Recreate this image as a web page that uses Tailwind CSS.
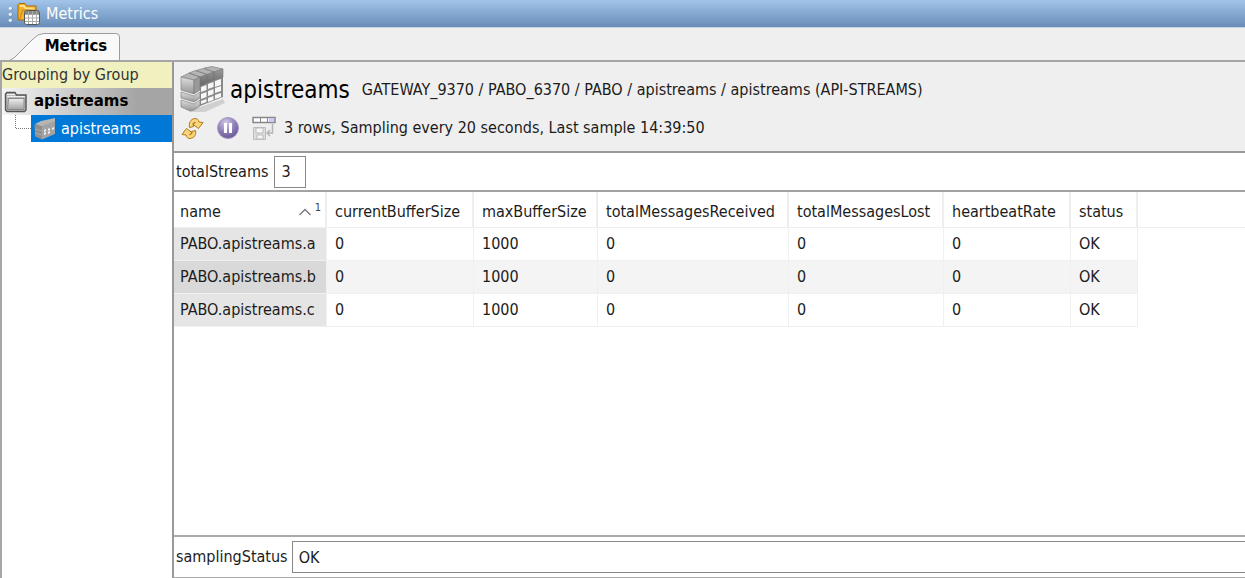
<!doctype html>
<html lang="en">

<head>
    <meta charset="UTF-8">
    <meta name="viewport" content="width=device-width, initial-scale=1.0">
    <title>Metrics</title>
    <script src="https://cdn.jsdelivr.net/npm/@tailwindcss/browser@4"></script>
</head>

<body class="flex h-screen flex-col overflow-hidden bg-[#efefef] font-['DejaVu_Sans_Condensed','Noto_Sans',sans-serif] text-base text-[#1c1c1c]">
    <!-- title bar -->
    <header class="flex h-7 shrink-0 items-center border-b border-[#c3d3e4] bg-linear-to-b from-[#a3c4ea] to-[#678db8] pl-2 text-white">
        <svg class="h-6 w-8" viewBox="0 0 32 24" aria-hidden="true">
            <g fill="#6f91b8">
                <circle cx="3" cy="7" r="1.8" />
                <circle cx="3" cy="13" r="1.8" />
                <circle cx="3" cy="19" r="1.8" />
            </g>
            <g fill="#edf3fa">
                <circle cx="2.3" cy="6.3" r="1.6" />
                <circle cx="2.3" cy="12.3" r="1.6" />
                <circle cx="2.3" cy="18.3" r="1.6" />
            </g>
            <path d="M10 18V2.500l1-1h6l1.500 2.500H28V18z" fill="#f2b32c" stroke="#a96908" />
            <path d="M12 4h4l1.500 2.500H26" fill="none" stroke="#ffe08a" stroke-width="2" />
            <path d="M11.500 18l3-10H26" fill="none" stroke="#c98514" />
            <rect x="16.500" y="8.500" width="15" height="14" rx="2" fill="#fff" stroke="#555" />
            <path d="M17 9h14v3H17z" fill="#888" />
            <path d="M20.500 9v13M24.500 9v13M28.500 9v13M17 12.500h14M17 16h14M17 19.500h14" stroke="#aaa" />
        </svg>
        <span class="ml-1.5">Metrics</span>
    </header>

    <!-- tabs -->
    <nav class="flex h-8 shrink-0 items-end">
        <button type="button" class="relative h-7 w-30 pl-8 text-center font-['DejaVu_Sans',sans-serif] text-[15px] font-bold text-black">
            <svg class="absolute inset-0 h-full w-full" viewBox="0 0 120 28" aria-hidden="true">
                <path d="M10 28Q14 27 18 22L33 7Q38 1.500 44 1.500H116Q119.500 1.500 119.500 5V28" fill="#f9f9f9" stroke="#9c9c9c" />
            </svg>
            <span class="relative">Metrics</span>
        </button>
    </nav>

    <div class="flex min-h-0 flex-1 border-t-2 border-l-2 border-[#a5a5a5]">
        <!-- group tree -->
        <aside class="w-[170px] shrink-0 bg-white">
            <div class="h-[26px] bg-[#f1f0bf] leading-[26px] text-[#333]">Grouping by Group</div>
            <div class="flex h-[27px] items-center bg-linear-to-r from-[#f4f4f4] to-[#a5a5a5] to-80% pl-0.5 font-['DejaVu_Sans',sans-serif] text-[15px] font-bold text-black">
                <svg class="h-6 w-6" viewBox="0 0 24 24" aria-hidden="true">
                    <defs>
                        <linearGradient id="folder" x2="0" y2="1">
                            <stop stop-color="#eee" />
                            <stop offset="1" stop-color="#a5a5a5" />
                        </linearGradient>
                    </defs>
                    <path d="M1.500 20V4L3 2.500h8L12.500 5H22v15l-1.500 1.500H3z" fill="#bbb" stroke="#555" stroke-width="1.400" />
                    <path d="M4.500 8.500h15.500v11H3.500z" fill="url(#folder)" stroke="#888" />
                    <path d="M3 4.500h8M3 6.500h18" stroke="#eee" />
                </svg>
                <span class="ml-1.5">apistreams</span>
            </div>
            <div class="flex h-[27px]">
                <svg class="h-[27px] w-[29px]" viewBox="0 0 29 27" aria-hidden="true">
                    <path d="M13.500 0v13.500H29" fill="none" stroke="#777" stroke-dasharray="1 1" />
                </svg>
                <a href="#" class="flex flex-1 items-center bg-[#0078d7] pl-0.5 text-white">
                    <svg class="h-6 w-6" viewBox="0 0 24 24" aria-hidden="true">
                        <path d="M2 7l6-3 14-3v5L9 10z" fill="#b5b5b5" />
                        <path d="M1.500 7.500L9 9v13.500l-7-3z" fill="#8e8e8e" />
                        <path d="M9 9l13-5v13L9 22.500z" fill="#a3a3a3" />
                        <path d="M2 12l7 2M2 16l7 2" stroke="#aaa" />
                        <path d="M11 13l2-1v2l-2 1zm4-1 2-1v2l-2 1zm4-1 2-1v2l-2 1zm-8 5 2-1v2l-2 1zm4-1 2-1v2l-2 1z" fill="#f4f4f4" />
                    </svg>
                    <span class="ml-1">apistreams</span>
                </a>
            </div>
        </aside>

        <main class="flex min-w-0 flex-1 flex-col border-l-2 border-[#999] bg-white">
            <section class="h-[91px] shrink-0 border-b-2 border-[#999] bg-[#efefef] pt-0.5 pl-1.5">
                <div class="flex h-[52px] items-center whitespace-nowrap">
                    <svg class="h-12 w-12" viewBox="0 0 48 48" aria-hidden="true">
                        <defs>
                            <linearGradient id="face" x2="0" y2="1">
                                <stop stop-color="#ddd" />
                                <stop offset="1" stop-color="#969696" />
                            </linearGradient>
                            <linearGradient id="back" x2="0" y2="1">
                                <stop stop-color="#999" />
                                <stop offset="1" stop-color="#666" />
                            </linearGradient>
                        </defs>
                        <path d="M17 42l26-9 2 4-20 9H9z" fill="#d0d0d0" />
                        <path d="M20 12l23-8v27l-23 9z" fill="#8a8a8a" />
                        <g stroke="#777" stroke-width=".6" stroke-linejoin="round">
                            <path d="M1 11l8-4 11 4-6 3zM9 7l6-2.500 12 4-7 2.500zM16 4.500l7-2 11 3.500-7 2.500zM24 2l8-1.500L43 3l-9 3z" fill="#b5b5b5" />
                            <path d="M20 11l7-2.500V17l-7 3zM27 8.500l7-2.500v8l-7 3zM34 6l9-3v8l-9 3z" fill="url(#back)" />
                            <path d="M1 11l13 3v14L1 24z" fill="url(#face)" />
                            <path d="M14 14l6-3v13l-6 4z" fill="#999" />
                            <path d="M1 26l13 4 6-4v6l-6 4-13-4z" fill="url(#face)" />
                            <path d="M1 34l13 4 6-4v6l-6 4-4 1-9-4z" fill="url(#face)" />
                        </g>
                        <path d="M21 21l5.500-2v5l-5.500 2zm7-3 5.500-2v5L28 23zm7-3 6-2v6l-6 2zM21 28l5.500-2v5L21 33zm7-3 5.500-2v5L28 30zm7-3 6-2v5l-6 2zM21 35l5.500-2v3L21 38zm7-3 5.500-2v4L28 36zm7-3 6-2v4l-6 2z" fill="#f7f7f7" />
                    </svg>
                    <h1 class="ml-0.5 text-2xl text-black">apistreams</h1>
                    <span class="ml-3">GATEWAY_9370 / PABO_6370 / PABO / apistreams / apistreams (API-STREAMS)</span>
                </div>
                <div class="flex h-6 items-center whitespace-nowrap">
                    <button type="button" aria-label="Refresh">
                        <svg class="h-6 w-6" viewBox="0 0 24 24" aria-hidden="true">
                            <g fill="#f9d67c" stroke="#b57613" stroke-linejoin="round">
                                <path d="M9.500 11.500C8.500 7 10.500 3 15 2.500c2 0 3.500 1 4 3.500l4 .500-4.500 6-6-4.500 3-1.500c-1.500-1-2.500 1-2 4z" />
                                <path d="M15.500 14.500c1 4-1 7.500-5.500 8-2 0-3.500-1-4-3.500l-4-.500 4.500-6 6 4.500-3 1.500c1.500 1 2.500-1 2-3z" />
                            </g>
                        </svg>
                    </button>
                    <button type="button" class="ml-3" aria-label="Pause">
                        <svg class="h-6 w-6" viewBox="0 0 24 24" aria-hidden="true">
                            <defs>
                                <radialGradient id="pause" cx=".4" cy=".25" r=".8">
                                    <stop stop-color="#d2c9e6" />
                                    <stop offset=".6" stop-color="#8878b3" />
                                    <stop offset="1" stop-color="#655291" />
                                </radialGradient>
                            </defs>
                            <circle cx="12" cy="12" r="10.500" fill="url(#pause)" stroke="#a398c5" />
                            <path d="M8 7h3v10H8zM13 7h3v10h-3z" fill="#fff" />
                        </svg>
                    </button>
                    <button type="button" class="ml-3" aria-label="Save sample">
                        <svg class="h-6 w-6" viewBox="0 0 24 24" fill="none" aria-hidden="true">
                            <path d="M1 1.500h22v5H1z" fill="#fff" stroke="#888" stroke-width="1.500" />
                            <path d="M17 2h5v4h-5z" fill="#c8caff" />
                            <path d="M8.500 1v6M15.500 1v6" stroke="#888" />
                            <path d="M1.500 11.500h12v12h-12z" fill="#ddd" stroke="#bcbcbc" />
                            <path d="M4 12h7v5H4zM5 19h6v4H5z" fill="#f7f7f7" stroke="#bbb" />
                            <path d="M20.500 8v9H15m3-3-3 3 3 3" stroke="#b5b5b5" stroke-width="1.500" />
                        </svg>
                    </button>
                    <span class="ml-2">3 rows, Sampling every 20 seconds, Last sample 14:39:50</span>
                </div>
            </section>

            <div class="flex h-[39px] shrink-0 items-center border-b-2 border-[#a2a2a2] pl-0.5">
                <label for="total-streams">totalStreams</label>
                <input id="total-streams" class="ml-1.5 h-8 w-8 border border-[#888] pl-1.5" value="3" readonly>
            </div>

            <div class="min-h-0 flex-1 overflow-hidden">
                <table class="w-full table-fixed border-separate border-spacing-0 text-left whitespace-nowrap">
                    <colgroup>
                        <col class="w-[153px]">
                        <col class="w-[147px]">
                        <col class="w-[124px]">
                        <col class="w-[191px]">
                        <col class="w-[155px]">
                        <col class="w-[127px]">
                        <col class="w-[67px]">
                        <col>
                    </colgroup>
                    <thead>
                        <tr class="h-9 *:border-b *:border-[#eee] *:p-0 *:pt-1 *:pl-2 *:font-normal *:first:pl-1.5 *:not-last:border-r-2">
                            <th>
                                <div class="flex items-center">
                                    <span>name</span>
                                    <svg class="ml-auto h-2 w-3" viewBox="0 0 12 8" aria-hidden="true">
                                        <path d="M.5 7L6 1.500 11.500 7" fill="none" stroke="#777" stroke-width="1.300" />
                                    </svg>
                                    <span class="mr-1 mb-2 ml-1 text-[11px] leading-3 text-[#444]">1</span>
                                </div>
                            </th>
                            <th>currentBufferSize</th>
                            <th>maxBufferSize</th>
                            <th>totalMessagesReceived</th>
                            <th>totalMessagesLost</th>
                            <th>heartbeatRate</th>
                            <th>status</th>
                            <th></th>
                        </tr>
                    </thead>
                    <tbody>
                        <tr class="h-[33px] *:border-r *:border-b *:border-[#f0f0f0] *:p-0 *:pl-2 *:first:pl-1.5">
                            <td class="bg-[#e5e5e5]">PABO.apistreams.a</td>
                            <td>0</td>
                            <td>1000</td>
                            <td>0</td>
                            <td>0</td>
                            <td>0</td>
                            <td>OK</td>
                        </tr>
                        <tr class="h-[33px] bg-[#f4f4f4] *:border-r *:border-b *:border-[#f0f0f0] *:p-0 *:pl-2 *:first:pl-1.5">
                            <td class="bg-[#d9d9d9]">PABO.apistreams.b</td>
                            <td>0</td>
                            <td>1000</td>
                            <td>0</td>
                            <td>0</td>
                            <td>0</td>
                            <td>OK</td>
                        </tr>
                        <tr class="h-[33px] *:border-r *:border-b *:border-[#f0f0f0] *:p-0 *:pl-2 *:first:pl-1.5">
                            <td class="bg-[#e5e5e5]">PABO.apistreams.c</td>
                            <td>0</td>
                            <td>1000</td>
                            <td>0</td>
                            <td>0</td>
                            <td>0</td>
                            <td>OK</td>
                        </tr>
                    </tbody>
                </table>
            </div>

            <div class="flex h-[43px] shrink-0 items-center border-t-2 border-b border-[#aaa] pl-0.5">
                <label for="sampling-status">samplingStatus</label>
                <input id="sampling-status" class="ml-1 h-8 min-w-0 flex-1 border border-r-0 border-[#888] pl-1.5" value="OK" readonly>
            </div>
        </main>
    </div>
</body>

</html>
